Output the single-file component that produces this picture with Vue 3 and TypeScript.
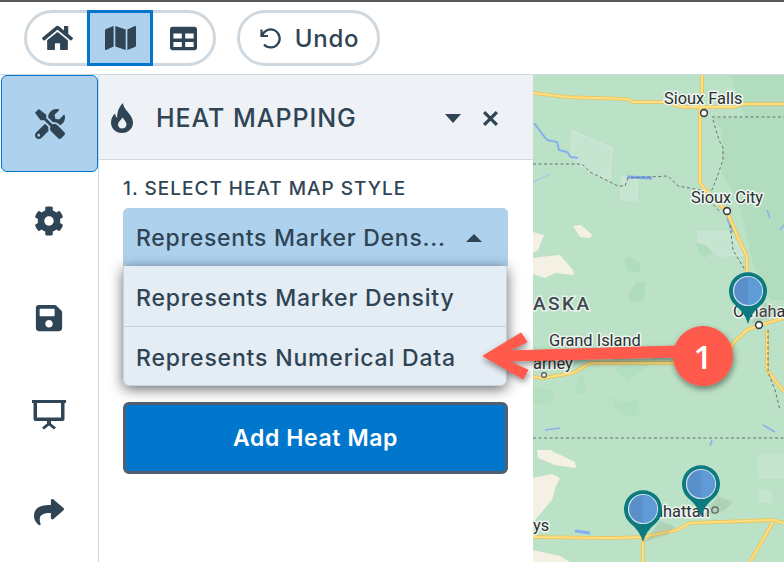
<script setup lang="ts">
const font = 'Inter, "Liberation Sans", sans-serif'
interface Pin { x: number; y: number }
const pins: Pin[] = [
  { x: 748, y: 291 },
  { x: 643, y: 509 },
  { x: 701, y: 484 },
]
const roads: string[] = [
  'M533 93 L567 97 L627 99 L633 102 L663 102 L683 107 L733 107 L743 104 L784 104',
  'M702 74 L702 92 L700 112 L700 182 L703 187 L727 212 L737 235 L747 257 L747 272',
  'M784 318 L760 325 L747 330 L733 343 L727 360 L673 363 L590 363 L573 373 L543 378 L533 377',
  'M533 537 L610 538 L643 537 L677 530 L690 523 L773 520 L784 523',
  'M643 537 L643 562',
  'M773 522 L750 562',
  'M767 330 L767 370 L784 392',
]
const borders: string[] = [
  'M533 164 L582 164 L590 172 L618 186 L625 186 L628 178 L668 176 L678 186 L700 190 L720 212',
  'M712 117 L784 117 M713 120 L719 140 L723 148 L723 160 L716 180 L711 192 L711 200',
  'M730 225 L733 250 L745 270',
  'M533 438 L784 438',
  'M768 330 L768 372 L775 390 L780 410',
]
</script>

<template>
  <div class="app" :style="{ fontFamily: font }">
    <header class="toolbar">
      <div class="segmented">
        <button class="seg">
          <svg viewBox="0 0 576 512" class="i-home"><path d="M280.37 148.26L96 300.11V464a16 16 0 0 0 16 16l112.06-.29a16 16 0 0 0 15.92-16V368a16 16 0 0 1 16-16h64a16 16 0 0 1 16 16v95.64a16 16 0 0 0 16 16.05L464 480a16 16 0 0 0 16-16V300L295.67 148.26a12.19 12.19 0 0 0-15.3 0zM571.6 251.47L488 182.56V44.05a12 12 0 0 0-12-12h-56a12 12 0 0 0-12 12v72.61L318.47 43a48 48 0 0 0-61 0L4.34 251.47a12 12 0 0 0-1.6 16.9l25.5 31A12 12 0 0 0 45.15 301l235.22-193.74a12.19 12.19 0 0 1 15.3 0L530.9 301a12 12 0 0 0 16.9-1.6l25.5-31a12 12 0 0 0-1.7-16.93z"/></svg>
        </button>
        <button class="seg seg-active">
          <svg viewBox="0 0 576 512" class="i-home"><path d="M0 117.66v346.32c0 11.32 11.43 19.06 21.94 14.86L160 416V32L20.12 87.95A32.006 32.006 0 0 0 0 117.66zM192 416l192 64V96L192 32v384zM554.06 33.16L416 96v384l139.88-55.95A31.996 31.996 0 0 0 576 394.34V48.02c0-11.32-11.43-19.06-21.94-14.86z"/></svg>
        </button>
        <button class="seg">
          <svg viewBox="0 0 512 512" class="i-table"><path d="M464 32H48C21.49 32 0 53.49 0 80v352c0 26.51 21.49 48 48 48h416c26.51 0 48-21.49 48-48V80c0-26.51-21.49-48-48-48zM224 416H64v-96h160v96zm0-160H64v-96h160v96zm224 160H288v-96h160v96zm0-160H288v-96h160v96z"/></svg>
        </button>
      </div>
      <button class="undo">
        <svg viewBox="0 0 24 24" class="i-undo"><path d="M3.5 3.5 V10 H10" fill="none" stroke-width="2.2"/><path d="M4 10 A9 9 0 1 1 6 18.5" fill="none" stroke-width="2.2"/></svg>
        <span>Undo</span>
      </button>
    </header>

    <div class="body">
      <nav class="rail">
        <button class="rail-btn rail-active">
          <svg viewBox="0 0 512 512" class="i-rail"><path d="M501.1 395.7L384 278.6c-23.1-23.1-57.6-27.6-85.4-13.9L192 158.1V96L64 0 0 64l96 128h62.1l106.6 106.6c-13.6 27.8-9.2 62.3 13.9 85.4l117.1 117.1c14.6 14.6 38.2 14.6 52.7 0l52.7-52.7c14.5-14.6 14.5-38.2 0-52.7zM331.7 225c28.3 0 54.9 11 74.9 31l19.4 19.4c15.8-6.9 30.8-16.5 43.8-29.5 37.1-37.1 49.7-89.3 37.9-136.7-2.2-9-13.5-12.1-20.1-5.5l-74.4 74.4-67.9-11.3L334 98.9l74.4-74.4c6.6-6.6 3.4-17.9-5.7-20.2-47.4-11.7-99.6.9-136.6 37.9-28.5 28.5-41.9 66.1-41.2 103.6l82.1 82.1c8.1-1.9 16.5-2.9 24.7-2.9zm-103.9 82l-56.7-56.7L18.7 402.8c-25 25-25 65.5 0 90.5s65.5 25 90.5 0l123.6-123.6c-7.6-19.9-9.9-41.6-5-62.7zM64 472c-13.2 0-24-10.8-24-24 0-13.3 10.7-24 24-24s24 10.7 24 24c0 13.2-10.7 24-24 24z"/></svg>
        </button>
        <button class="rail-btn">
          <svg viewBox="0 0 512 512" class="i-rail"><path d="M487.4 315.7l-42.6-24.6c4.3-23.2 4.3-47 0-70.2l42.6-24.6c4.9-2.8 7.1-8.6 5.5-14-11.1-35.6-30-67.8-54.7-94.6-3.8-4.1-10-5.1-14.8-2.3L380.8 110c-17.9-15.4-38.5-27.3-60.8-35.1V25.8c0-5.6-3.9-10.5-9.4-11.7-36.7-8.2-74.3-7.8-109.2 0-5.5 1.2-9.4 6.1-9.4 11.7V75c-22.2 7.9-42.8 19.8-60.8 35.1L88.7 85.5c-4.9-2.8-11-1.9-14.8 2.3-24.7 26.7-43.6 58.9-54.7 94.6-1.7 5.4.6 11.2 5.5 14L67.3 221c-4.3 23.2-4.3 47 0 70.2l-42.6 24.6c-4.9 2.8-7.1 8.6-5.5 14 11.1 35.6 30 67.8 54.7 94.6 3.8 4.1 10 5.1 14.8 2.3l42.6-24.6c17.9 15.4 38.5 27.3 60.8 35.1v49.2c0 5.6 3.9 10.5 9.4 11.7 36.7 8.2 74.3 7.8 109.2 0 5.5-1.2 9.4-6.1 9.4-11.7v-49.2c22.2-7.9 42.8-19.8 60.8-35.1l42.6 24.6c4.9 2.8 11 1.9 14.8-2.3 24.7-26.7 43.6-58.9 54.7-94.6 1.5-5.5-.7-11.3-5.6-14.1zM256 336c-44.1 0-80-35.9-80-80s35.9-80 80-80 80 35.9 80 80-35.9 80-80 80z"/></svg>
        </button>
        <button class="rail-btn">
          <svg viewBox="0 0 448 512" class="i-rail"><path d="M433.941 129.941l-83.882-83.882A48 48 0 0 0 316.118 32H48C21.49 32 0 53.49 0 80v352c0 26.51 21.49 48 48 48h352c26.51 0 48-21.49 48-48V163.882a48 48 0 0 0-14.059-33.941zM224 416c-35.346 0-64-28.654-64-64 0-35.346 28.654-64 64-64s64 28.654 64 64c0 35.346-28.654 64-64 64zm96-304.52V212c0 6.627-5.373 12-12 12H76c-6.627 0-12-5.373-12-12V108c0-6.627 5.373-12 12-12h228.52c3.183 0 6.235 1.264 8.485 3.515l3.48 3.48A11.996 11.996 0 0 1 320 111.48z"/></svg>
        </button>
        <button class="rail-btn">
          <svg viewBox="0 0 34 30" class="i-present"><path fill-rule="evenodd" d="M0 0h34v3h-1.500v16a2 2 0 0 1-2 2H19v2.500l5 4-2 2-5-4-5 4-2-2 5-4V21H3.500a2 2 0 0 1-2-2V3H0zM5 3v14.500h24V3z"/></svg>
        </button>
        <button class="rail-btn">
          <svg viewBox="0 0 512 512" class="i-rail"><path d="M503.691 189.836L327.687 37.851C312.281 24.546 288 35.347 288 56.015v80.053C127.371 137.907 0 170.1 0 322.326c0 61.441 39.581 122.309 83.333 154.132 13.653 9.931 33.111-2.533 28.077-18.631C66.066 312.814 132.917 274.316 288 272.085V360c0 20.7 24.3 31.453 39.687 18.164l176.004-152c11.071-9.562 11.086-26.753 0-36.328z"/></svg>
        </button>
      </nav>

      <section class="panel">
        <div class="panel-head">
          <svg viewBox="0 0 22 30" class="i-fire"><path fill-rule="evenodd" d="M12 0c.6 5 3.400 7 6 10.500 2.400 3.200 4 6 4 9.300C22 25.500 17.200 30 11 30S0 25.500 0 19.500c0-3.700 1.700-6.800 3.900-9 .4 2 1 3.300 2.300 4.300C6 9 8 3.500 12 0zM11 25.500c2.600 0 4.500-1.800 4.500-4.100 0-2.600-2.300-4.400-4-7-1.500 2.500-4.500 4.400-4.500 7 0 2.300 1.900 4.100 4 4.100z"/></svg>
          <h2 class="title">HEAT MAPPING</h2>
          <span class="caret-down"></span>
          <svg viewBox="0 0 16 16" class="i-close"><path d="M2 2 L14 14 M14 2 L2 14" stroke-width="3" fill="none"/></svg>
        </div>
        <div class="panel-body">
          <div class="label">1. SELECT HEAT MAP STYLE</div>
          <div class="select-wrap">
            <div class="select">
              <span class="select-text">Represents Marker Dens...</span>
              <span class="caret-up"></span>
            </div>
            <ul class="menu">
              <li class="opt">Represents Marker Density</li>
              <li class="opt">Represents Numerical Data</li>
            </ul>
          </div>
          <button class="add">Add Heat Map</button>
        </div>
      </section>

      <div class="map">
        <svg class="map-svg" viewBox="533 75 251 487" width="251" height="487">
          <rect x="533" y="74" width="251" height="488" fill="#bbe2c6"/>
          <!-- relief -->
          <path d="M725 74 L784 74 L784 300 L770 300 L752 262 L745 225 L735 195 L722 175 L722 130 L712 118 L745 118 L730 74Z" fill="#b1ddbe"/>
          <path d="M623 258 L630 256 L640 264 L640 272 L628 271Z" fill="#afdcbc"/>
          <path d="M636 282 L645 281 L644 300 L632 303 L628 296Z" fill="#afdcbc"/>
          <path d="M696 244 L705 243 L712 252 L705 258 L698 252Z" fill="#afdcbc"/>
          <path d="M610 396 L625 403 L637 400 L640 415 L628 417 L615 408Z" fill="#b3dfc1"/>
          <path d="M533 388 L555 390 L552 402 L540 405 L533 402Z" fill="#b3dfc1"/>
          <path d="M578 378 L584 375 L586 392 L575 396Z" fill="#b3dfc1"/>
          <path d="M615 370 L650 348 L658 360 L640 372 L628 382Z" fill="#b3dfc1"/>
          <!-- park -->
          <path d="M572 131 L612 148 L610 178 L606 178 L590 172 L572 158Z" fill="#c6e5d0" stroke="#cfe5d7" stroke-width="1.5"/>
          <path d="M622 177 L637 177 L637 200 L621 200Z" fill="#c6e5d0" stroke="#cfe5d7" stroke-width="1.5"/>
          <path d="M698 232 L727 232 L735 240 L745 255 L718 256 L707 245 L698 241Z" fill="#c6e5d0" stroke="#cfe5d7" stroke-width="1.5"/>
          <rect x="758" y="454" width="26" height="25" fill="#c6e5d0"/>
          <rect x="759" y="490" width="13" height="13" fill="#c6e5d0" stroke="#cfe5d7"/>
          <!-- tan -->
          <path d="M533 232 L544 235 L538 250 L533 253Z" fill="#f5f0e4"/>
          <path d="M573 226 L581 225 L592 235 L590 238 L580 237Z" fill="#f5f0e4"/>
          <path d="M533 258 L549 256 L560 255 L573 270 L574 275 L555 273 L545 278 L533 274Z" fill="#f5f0e4"/>
          <path d="M537 450 L550 450 L575 462 L576 468 L555 465 L538 458Z" fill="#f5f0e4"/>
          <path d="M533 478 L552 474 L560 478 L556 486 L552 500 L535 520 L533 520Z" fill="#f5f0e4"/>
          <path d="M533 550 L560 556 L570 562 L533 562Z" fill="#f5f0e4"/>
          <!-- water -->
          <path d="M534 123 L547 140 L557 142 L559 150 L567 152 L571 157 L578 158" fill="none" stroke="#86b0f0" stroke-width="2"/>
          <path d="M533 182 L550 174" fill="none" stroke="#9cc2f2" stroke-width="1"/>
          <path d="M627 177 L652 178" fill="none" stroke="#7da8ee" stroke-width="3"/>
          <path d="M767 210 L770 218 M780 230 L784 225" fill="none" stroke="#86b0f0" stroke-width="1.5"/>
          <path d="M727 218 L733 232" fill="none" stroke="#86b0f0" stroke-width="2"/>
          <path d="M545 430 L560 428 M763 425 L775 432 M712 440 L710 446" fill="none" stroke="#86b0f0" stroke-width="1.5"/>
          <path d="M575 531 L590 533" fill="none" stroke="#86b0f0" stroke-width="3"/>
          <!-- roads -->
          <g fill="none" stroke-linejoin="round">
            <path v-for="(d, i) in roads" :key="'o' + i" :d="d" stroke="#f2c04f" stroke-width="3.6"/>
            <path v-for="(d, i) in roads" :key="'y' + i" :d="d" stroke="#fddf85" stroke-width="2"/>
            <path v-for="(d, i) in borders" :key="'b' + i" :d="d" stroke="#6a6f74" stroke-width="1" stroke-dasharray="3 2.5"/>
          </g>
          <!-- city dots -->
          <g fill="#fff" stroke="#3c4043" stroke-width="1.6">
            <circle cx="704" cy="113" r="3.4"/>
            <circle cx="727" cy="211" r="3.4"/>
            <circle cx="759" cy="325" r="3.4"/>
          </g>
          <g fill="none" stroke="#555" stroke-width="1.2">
            <circle cx="544" cy="375" r="2.4" fill="#eee"/>
            <circle cx="715" cy="510" r="3.2"/>
          </g>
          <!-- labels -->
          <g class="labels">
            <text x="664" y="104">Sioux Falls</text>
            <text x="691" y="203">Sioux City</text>
            <text x="733" y="317">Omaha</text>
            <text x="549" y="346">Grand Island</text>
            <text x="533" y="369">arney</text>
            <text x="533" y="531">ys</text>
            <text x="654" y="517">nhattan</text>
          </g>
          <text class="state" x="533" y="310">ASKA</text>
          <!-- pins -->
          <g v-for="(p, i) in pins" :key="'p' + i">
            <path :d="`M${p.x + 2} ${p.y + 33} l22 -7 l8 -8 l-15 -6 z`" fill="#7b8f84" opacity=".2"/>
            <path :d="`M${p.x} ${p.y + 33} Q${p.x - 3} ${p.y + 22} ${p.x - 13} ${p.y + 14} A19 19 0 1 1 ${p.x + 13} ${p.y + 14} Q${p.x + 3} ${p.y + 22} ${p.x} ${p.y + 33} Z`" fill="#0d7a80"/>
            <circle :cx="p.x" :cy="p.y" r="14.5" fill="#5b8fc9" stroke="#cfe0ef" stroke-width="1.2"/>
            <path :d="`M${p.x} ${p.y - 14} A14 14 0 0 1 ${p.x} ${p.y + 14} Z`" fill="#5f9bd6"/>
          </g>
        </svg>
      </div>
    </div>

    <svg class="callout" viewBox="0 0 784 562" width="784" height="562">
      <defs>
        <filter id="sh" x="-20%" y="-20%" width="140%" height="140%">
          <feDropShadow dx="1" dy="3" stdDeviation="3" flood-color="#000" flood-opacity=".45"/>
        </filter>
      </defs>
      <g filter="url(#sh)">
        <path d="M676 346 L508 351 L527 342 L521 333 L483 356 L523 379 L528 370 L508 361 L676 357Z" fill="#ff5a4c" stroke="#ff5a4c" stroke-width="1" stroke-linejoin="round"/>
        <circle cx="703" cy="356" r="30" fill="#ff5a4c"/>
      </g>
      <text x="703" y="369" class="badge-num" text-anchor="middle">1</text>
    </svg>
  </div>
</template>

<style scoped>
.app {
  position: relative;
  width: 784px;
  height: 562px;
  overflow: hidden;
  background: #fff;
  color: #2f4454;
  display: flex;
  flex-direction: column;
  border-top: 2px solid #58595b;
  box-sizing: border-box;
}
button {
  font-family: inherit;
  color: inherit;
  padding: 0;
  background: none;
  border: 0;
}
svg {
  fill: #2f4454;
  stroke: #2f4454;
  stroke-width: 0;
}
.toolbar {
  height: 73px;
  flex: none;
  box-sizing: border-box;
  display: flex;
  align-items: flex-start;
  padding: 8px 0 0 24px;
  gap: 21px;
  border-bottom: 1px solid #d0d9df;
}
.segmented {
  width: 192px;
  height: 56px;
  box-sizing: border-box;
  border: 3px solid #cfd8de;
  border-radius: 28px;
  display: flex;
  position: relative;
}
.seg {
  flex: 1;
  display: flex;
  align-items: center;
  justify-content: center;
}
.seg-active {
  flex: none;
  width: 66px;
  height: 56px;
  margin: -3px 0;
  box-sizing: border-box;
  background: #aed2ee;
  border: 3px solid #0077cc;
}
.i-home { width: 31px; height: 28px; }
.i-table { width: 27px; height: 27px; }
.undo {
  width: 143px;
  height: 56px;
  box-sizing: border-box;
  border: 3px solid #cfd8de;
  border-radius: 28px;
  display: flex;
  align-items: center;
  justify-content: center;
  gap: 13px;
  font-size: 24px;
  font-weight: 500;
  letter-spacing: 0.8px;
}
.i-undo { width: 24px; height: 24px; fill: none; }
.body {
  flex: 1;
  min-height: 0;
  display: flex;
}
.rail {
  width: 99px;
  flex: none;
  box-sizing: border-box;
  border-right: 1px solid #cfdbe4;
  display: flex;
  flex-direction: column;
}
.rail-btn {
  width: 97px;
  height: 97px;
  margin-left: 0;
  flex: none;
  display: flex;
  align-items: center;
  justify-content: center;
  box-sizing: border-box;
}
.rail-active {
  background: #aed2ee;
  border: 1px solid #0077cc;
  border-radius: 6px;
  margin-left: 1px;
}
.i-rail { width: 30px; height: 30px; }
.i-present { width: 34px; height: 30px; }
.panel {
  width: 434px;
  flex: none;
  display: flex;
  flex-direction: column;
}
.panel-head {
  height: 85px;
  box-sizing: border-box;
  flex: none;
  display: flex;
  align-items: center;
  background: #eef1f5;
  border-bottom: 1px solid #d0d9df;
  padding: 2px 34px 0 12px;
}
.i-fire { width: 22px; height: 30px; flex: none; }
.title {
  margin: 0 0 0 23px;
  font-size: 25px;
  font-weight: 500;
  letter-spacing: 0.95px;
  flex: 1;
}
.caret-down {
  width: 0;
  height: 0;
  border-left: 8px solid transparent;
  border-right: 8px solid transparent;
  border-top: 9px solid #2f4454;
  margin-right: 21px;
}
.i-close { width: 17px; height: 17px; }
.panel-body {
  padding: 18px 25px 0 24px;
  display: flex;
  flex-direction: column;
}
.label {
  font-size: 19px;
  font-weight: 500;
  line-height: 22px;
  letter-spacing: 1px;
  white-space: nowrap;
}
.select-wrap {
  position: relative;
  margin-top: 8px;
  height: 194px;
}
.select {
  height: 58px;
  box-sizing: border-box;
  background: #aed2ee;
  border: 1px solid #b4cfe4;
  border-radius: 5px 5px 0 0;
  display: flex;
  align-items: center;
  justify-content: space-between;
  padding: 2px 25px 0 12px;
  font-size: 23px;
  font-weight: 500;
  letter-spacing: 0.72px;
}
.select-text { white-space: nowrap; }
.caret-up {
  width: 0;
  height: 0;
  border-left: 8px solid transparent;
  border-right: 8px solid transparent;
  border-bottom: 8px solid #2f4454;
}
.menu {
  position: absolute;
  left: 0;
  right: 1px;
  top: 58px;
  margin: 0;
  padding: 0;
  list-style: none;
  background: #e4ecf4;
  border-radius: 0 0 6px 6px;
  box-shadow: 0 3px 14px rgba(0, 0, 0, 0.6);
  border: 1px solid #c7d2dc;
  border-top: 0;
  box-sizing: border-box;
  height: 120px;
  font-size: 23px;
  font-weight: 500;
  letter-spacing: 0.82px;
}
.opt {
  height: 60px;
  box-sizing: border-box;
  display: flex;
  align-items: center;
  padding: 3px 0 0 12px;
  white-space: nowrap;
}
.opt + .opt { border-top: 1px solid #c8d2dc; padding-top: 2px; }
.add {
  height: 72px;
  box-sizing: border-box;
  background: #0077cc;
  border: 3px solid #51606f;
  border-radius: 6px;
  color: #fff;
  font-size: 23px;
  font-weight: 600;
  letter-spacing: 0.6px;
}
.map {
  flex: 1;
  min-width: 0;
  overflow: hidden;
}
.map-svg { display: block; stroke-width: 0; }
.labels text {
  font-family: Roboto, "Liberation Sans", sans-serif;
  font-size: 16.4px;
  fill: #2b2f33;
  stroke: #eef6f0;
  stroke-width: 3px;
  paint-order: stroke;
  stroke-linejoin: round;
}
.state {
  font-family: Roboto, "Liberation Sans", sans-serif;
  font-size: 19px;
  font-weight: 500;
  letter-spacing: 2.5px;
  fill: #3e4a4f;
  stroke: #e6f2ea;
  stroke-width: 3px;
  paint-order: stroke;
}
.callout {
  position: absolute;
  left: 0;
  top: -2px;
  pointer-events: none;
  fill: none;
  stroke: none;
}
.badge-num {
  font-family: "Open Sans", "Liberation Sans", sans-serif;
  font-size: 33px;
  font-weight: 600;
  fill: #fff;
}
</style>
